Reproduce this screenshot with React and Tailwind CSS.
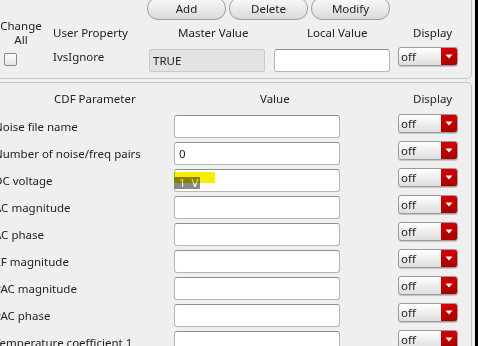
import React from 'react';

const rows = [
  { label: 'Noise file name', value: '' },
  { label: 'Number of noise/freq pairs', value: '0' },
  { label: 'DC voltage', value: 'hl' },
  { label: 'AC magnitude', value: '' },
  { label: 'AC phase', value: '' },
  { label: 'XF magnitude', value: '' },
  { label: 'PAC magnitude', value: '' },
  { label: 'PAC phase', value: '' },
  { label: 'Temperature coefficient 1', value: '' },
];

const PillButton = ({ children }) => (
  <button className="w-[79px] h-[23px] shrink-0 rounded-[11px] border border-[#9e9e9e] bg-gradient-to-b from-[#fbfbfb] to-[#d9d9d9] text-[11.5px] leading-none text-[#222]">
    {children}
  </button>
);

// menu "off" avec la fleche rouge
const OffMenu = () => (
  <div className="w-[60px] h-[19px] flex rounded-[3px] border border-[#9a9a9a] bg-gradient-to-b from-white to-[#dedede] shadow-[0_1px_0_#c8c8c8] overflow-hidden">
    <span className="flex-1 pl-[2px] text-[11.5px] leading-[17px] text-[#1a1a1a]">off</span>
    <span className="w-[16px] h-full flex items-center justify-center bg-gradient-to-b from-[#d40000] to-[#a80000]">
      <svg width="8" height="5" viewBox="0 0 8 5">
        <polygon points="0.5,0.5 7.5,0.5 4,4.5" fill="#fff" />
      </svg>
    </span>
  </div>
);

const Field = ({ value }) => (
  <div className="relative w-[166px] h-[23px] mt-[1px] rounded-[3px] border border-[#b6b6b6] border-t-[#8f8f8f] bg-white">
    {value === 'hl' ? (
      <>
        <span className="absolute left-[-1px] top-[7px] w-[26px] h-[12px] bg-[#8a8a8a] text-white text-[11.5px] leading-[12px] pl-[5px] whitespace-pre">
          1  V
        </span>
        <span className="absolute left-[-1px] top-[2px] w-[41px] h-[11px] bg-[#f7ef00] mix-blend-multiply" />
      </>
    ) : (
      <span className="absolute left-[4px] top-0 text-[11.5px] leading-[21px] text-[#1a1a1a]">{value}</span>
    )}
  </div>
);

export default function App() {
  return (
    <div
      className="w-[478px] h-[346px] overflow-hidden flex text-[#222]"
      style={{ fontFamily: '"Noto Sans", "DejaVu Sans", sans-serif' }}
    >
      <div className="w-[475px] h-full bg-[#efefef] flex flex-col">
        {/* haut: propriete utilisateur */}
        <div className="w-[472px] h-[79px] shrink-0 border-r border-b border-[#c6c6c6] rounded-br-[5px]">
          <div className="h-[23px] -mt-[3px] flex gap-[3px] pl-[147px]">
            <PillButton>Add</PillButton>
            <PillButton>Delete</PillButton>
            <PillButton>Modify</PillButton>
          </div>
          <div className="h-[26px] flex items-center text-[11.5px] leading-[14px]">
            <div className="w-[42px] text-center">
              Change
              <br />
              All
            </div>
            <div className="w-[107px] pl-[11px]">User Property</div>
            <div className="w-[116px] pl-[29px]">Master Value</div>
            <div className="w-[116px] ml-[9px] pl-[33px]">Local Value</div>
            <div className="w-[60px] ml-[8px] pl-[15px]">Display</div>
          </div>
          <div className="h-[26px] flex items-start text-[11.5px] leading-[14px]">
            <div className="w-[45px]">
              <div className="ml-[4px] mt-[7px] w-[13px] h-[13px] rounded-[2px] border border-[#8a8a8a] bg-gradient-to-b from-white to-[#e4e4e4]" />
            </div>
            <div className="w-[104px] pl-[8px] mt-[4px]">IvsIgnore</div>
            <div className="w-[116px] h-[23px] mt-[3px] rounded-[2px] border border-[#cacaca] bg-[#e3e3e3] pl-[3px] leading-[21px]">
              TRUE
            </div>
            <div className="w-[116px] h-[23px] mt-[3px] ml-[9px] rounded-[3px] border border-[#b6b6b6] border-t-[#8f8f8f] bg-white" />
            <div className="ml-[8px] mt-[1px]">
              <OffMenu />
            </div>
          </div>
        </div>

        {/* bas: parametres CDF */}
        <div className="w-[472px] mt-[3px] flex-1 border-t border-r border-[#c6c6c6] rounded-tr-[5px]">
          <div className="h-[31px] flex items-center text-[11.5px] leading-[14px]">
            <div className="w-[174px] pl-[54px]">CDF Parameter</div>
            <div className="w-[166px] pl-[86px]">Value</div>
            <div className="ml-[58px] pl-[15px]">Display</div>
          </div>
          {rows.map((r) => (
            <div key={r.label} className="h-[27px] flex items-start">
              <div className="w-[174px] h-[23px] mt-[1px] flex items-center">
                <span className="-ml-[6px] whitespace-nowrap text-[11.5px] leading-[14px]">{r.label}</span>
              </div>
              <Field value={r.value} />
              <div className="ml-[58px]">
                <OffMenu />
              </div>
            </div>
          ))}
        </div>
      </div>
      <div className="w-[3px] h-full bg-black" />
    </div>
  );
}
